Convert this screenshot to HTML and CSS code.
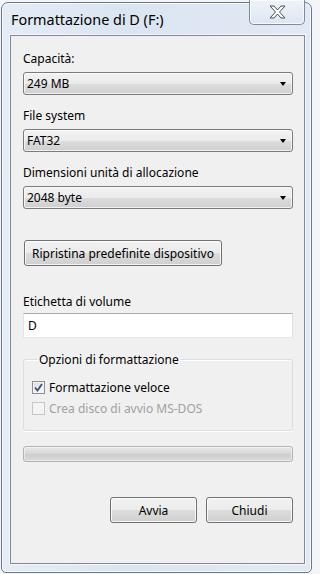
FILE: index.html
```html
<!DOCTYPE html>
<html lang="it">
<head>
  <meta charset="UTF-8">
  <meta name="viewport" content="width=device-width, initial-scale=1.0">
  <title>Formattazione di D (F:)</title>
  <link rel="stylesheet" href="styles.css">
</head>
<body>

  <div class="window">
    <!-- Title bar -->
    <div class="titlebar">
      <span class="title">Formattazione di D (F:)</span>
      <button class="close-btn" title="Chiudi">
        <svg width="17" height="14" viewBox="0 0 17 14">
          <polygon points="1,1 5,1 8.5,5 12,1 16,1 10.5,7 16,13 12,13 8.5,9 5,13 1,13 6.5,7" fill="#fff" stroke="#4a4f57" stroke-width="1" stroke-linejoin="round"/>
        </svg>
      </button>
    </div>

    <!-- Client area -->
    <div class="client">
      <div class="field">
        <div class="label">Capacità:</div>
        <div class="combo"><span>249 MB</span><span class="arrow"></span></div>
      </div>

      <div class="field">
        <div class="label">File system</div>
        <div class="combo"><span>FAT32</span><span class="arrow"></span></div>
      </div>

      <div class="field">
        <div class="label">Dimensioni unità di allocazione</div>
        <div class="combo"><span>2048 byte</span><span class="arrow"></span></div>
      </div>

      <button class="btn btn-reset">Ripristina predefinite dispositivo</button>

      <div class="field field-volume">
        <div class="label">Etichetta di volume</div>
        <div class="textbox">D</div>
      </div>

      <fieldset class="group">
        <legend>Opzioni di formattazione</legend>
        <div class="check-row">
          <span class="checkbox checked">
            <svg width="9" height="9" viewBox="0 0 9 9">
              <path d="M1 4.5 L3.5 7.5 L8 1" fill="none" stroke="#3b4f86" stroke-width="1.8"/>
            </svg>
          </span>
          <span>Formattazione veloce</span>
        </div>
        <div class="check-row disabled">
          <span class="checkbox"></span>
          <span>Crea disco di avvio MS-DOS</span>
        </div>
      </fieldset>

      <div class="progress"></div>

      <div class="actions">
        <button class="btn btn-action">Avvia</button>
        <button class="btn btn-action">Chiudi</button>
      </div>
    </div>
  </div>

</body>
</html>
```

FILE: styles.css
```css
/* Page */
body {
  margin: 0;
  background-color: #f3f5f8;
  font-family: "Noto Sans", "Open Sans", sans-serif;
  font-size: 12px;
  color: #000;
}

/* Window frame */
.window {
  box-sizing: border-box;
  width: 311px;
  height: 571px;
  margin: 2px 0 0 1px;
  border: 1px solid #6c7886;
  border-radius: 7px 7px 5px 5px;
  background: linear-gradient(to right, #e4ecf6, #dbe5f1 40%, #e1e9f4);
  box-shadow: inset 0 0 0 1px #f6f9fd;
  display: flex;
  flex-direction: column;
}

.titlebar {
  height: 32px;
  display: flex;
  justify-content: space-between;
  align-items: flex-start;
}

.title {
  font-size: 14.4px;
  line-height: 18px;
  margin: 8px 0 0 9px;
  color: #000;
}

.close-btn {
  width: 56px;
  height: 25px;
  margin: -3px 6px 0 0;
  padding: 0;
  border: 1px solid #7e8b9a;
  border-top: none;
  border-radius: 0 0 5px 5px;
  background: linear-gradient(#eef3f9, #dde6f1);
  box-shadow: inset 0 0 0 1px #f8fbfe;
  display: flex;
  align-items: center;
  justify-content: center;
}

.client {
  flex: 1;
  margin: 0 6px 8px 8px;
  padding: 15px 11px 0 12px;
  border: 1px solid #7d8a99;
  background-color: #f0f0f0;
  box-shadow: 0 0 0 1px #f5f8fc;
}

/* Labels and fields */
.label {
  line-height: 15px;
  margin-bottom: 6px;
}

.field {
  margin-bottom: 13px;
}

.combo {
  box-sizing: border-box;
  height: 23px;
  border: 1px solid #7b7b7b;
  border-radius: 3px;
  background: linear-gradient(#f2f2f2 0%, #ebebeb 50%, #dddddd 51%, #cfcfcf 100%);
  box-shadow: inset 0 0 0 1px rgba(255, 255, 255, 0.7);
  display: flex;
  align-items: center;
  justify-content: space-between;
  padding: 0 5px 0 3px;
  line-height: 15px;
}

.arrow {
  width: 0;
  height: 0;
  border-left: 3.5px solid transparent;
  border-right: 3.5px solid transparent;
  border-top: 4px solid #000;
  margin-right: 1px;
}

/* Buttons */
.btn {
  box-sizing: border-box;
  font-family: inherit;
  font-size: 12px;
  color: #000;
  border: 1px solid #707070;
  border-radius: 3px;
  background: linear-gradient(#f2f2f2 0%, #ebebeb 50%, #dddddd 51%, #cfcfcf 100%);
  box-shadow: inset 0 0 0 1px rgba(255, 255, 255, 0.8);
  padding: 0;
  line-height: 15px;
}

.btn-reset {
  display: block;
  height: 26px;
  padding: 0 7px;
  margin: 31px 0 0 1px;
}

.field-volume {
  margin-top: 28px;
  margin-bottom: 0;
}

.field-volume .label {
  margin-bottom: 4px;
}

.textbox {
  box-sizing: border-box;
  height: 25px;
  background-color: #fff;
  border: 1px solid #e3e9ef;
  border-top-color: #abadb3;
  border-left-color: #e2e3ea;
  border-right-color: #dbdfe6;
  padding: 0 4px;
  line-height: 23px;
}

/* Group box */
.group {
  margin: 14px 0 0 0;
  padding: 13px 9px 14px 8px;
  border: 1px solid #d5dfe5;
  border-radius: 3px;
  box-shadow: 0 1px 0 #fff, inset 0 1px 0 #fff;
}

.group legend {
  padding: 0 2px;
  margin-left: 5px;
  line-height: 15px;
}

.check-row {
  display: flex;
  align-items: center;
  gap: 4px;
  height: 15px;
  margin-bottom: 6px;
}

.check-row:last-child {
  margin-bottom: 0;
}

.checkbox {
  box-sizing: border-box;
  width: 13px;
  height: 13px;
  border: 1px solid #8e8f8f;
  background: linear-gradient(135deg, #dcdcdc, #fbfbfb);
  box-shadow: inset 0 0 0 1px #f4f4f4;
  display: flex;
  align-items: center;
  justify-content: center;
}

.check-row.disabled {
  color: #a0a0a0;
}

.check-row.disabled .checkbox {
  border-color: #c7c7c7;
  background: #f4f4f4;
}

/* Progress bar */
.progress {
  box-sizing: border-box;
  height: 16px;
  margin-top: 15px;
  border: 1px solid #b2b2b2;
  border-radius: 3px;
  background: linear-gradient(#e8e8e8, #d6d6d6 50%, #cdcdcd 51%, #dadada);
  box-shadow: inset 0 0 0 1px rgba(255, 255, 255, 0.5);
}

/* Bottom buttons */
.actions {
  display: flex;
  justify-content: flex-end;
  gap: 9px;
  margin-top: 35px;
}

.btn-action {
  width: 87px;
  height: 26px;
}
```
